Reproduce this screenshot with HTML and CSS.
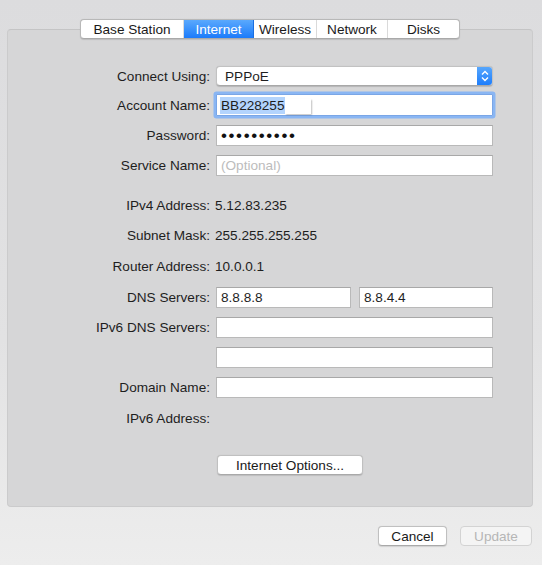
FILE: index.html
```html
<!DOCTYPE html>
<html>
<head>
<meta charset="utf-8">
<link rel="stylesheet" href="styles.css">
</head>
<body>
<div class="window">
  <div class="tabs">
    <div class="tab w-base">Base Station</div>
    <div class="tab w-inet active">Internet</div>
    <div class="tab w-wless">Wireless</div>
    <div class="tab w-net">Network</div>
    <div class="tab w-disks last">Disks</div>
  </div>
  <div class="panel">
    <div class="row">
      <div class="label">Connect Using:</div>
      <div class="popup">
        <span class="popup-text">PPPoE</span>
        <span class="popup-arrows">
          <svg width="16" height="20" viewBox="0 0 16 20">
            <path d="M5 8.5 L8 5.5 L11 8.5" fill="none" stroke="#fff" stroke-width="1.4"/>
            <path d="M5 11.5 L8 14.5 L11 11.5" fill="none" stroke="#fff" stroke-width="1.4"/>
          </svg>
        </span>
      </div>
    </div>
    <div class="row up">
      <div class="label">Account Name:</div>
      <div class="field focus"><span class="sel">BB228255</span><span class="ghost"></span></div>
    </div>
    <div class="row">
      <div class="label">Password:</div>
      <div class="field"><span class="dots">••••••••••</span></div>
    </div>
    <div class="row">
      <div class="label">Service Name:</div>
      <div class="field"><span class="placeholder">(Optional)</span></div>
    </div>
    <div class="row gap-top">
      <div class="label">IPv4 Address:</div>
      <div class="value">5.12.83.235</div>
    </div>
    <div class="row">
      <div class="label">Subnet Mask:</div>
      <div class="value">255.255.255.255</div>
    </div>
    <div class="row nudge">
      <div class="label">Router Address:</div>
      <div class="value">10.0.0.1</div>
    </div>
    <div class="row nudge">
      <div class="label">DNS Servers:</div>
      <div class="pair">
        <div class="field half">8.8.8.8</div>
        <div class="field half">8.8.4.4</div>
      </div>
    </div>
    <div class="row">
      <div class="label">IPv6 DNS Servers:</div>
      <div class="field"></div>
    </div>
    <div class="row">
      <div class="label"></div>
      <div class="field"></div>
    </div>
    <div class="row">
      <div class="label">Domain Name:</div>
      <div class="field"></div>
    </div>
    <div class="row nudge">
      <div class="label">IPv6 Address:</div>
      <div class="value"></div>
    </div>
    <div class="options-row">
      <div class="button options">Internet Options...</div>
    </div>
  </div>
  <div class="footer">
    <div class="button cancel">Cancel</div>
    <div class="button update disabled">Update</div>
  </div>
</div>
</body>
</html>
```
FILE: styles.css
```css
html, body {
  margin: 0;
  padding: 0;
}
body {
  width: 542px;
  height: 565px;
  overflow: hidden;
  font-family: "Liberation Sans", Arial, sans-serif;
  font-size: 13.6px;
  color: #1e1e1e;
  background: linear-gradient(#dcdcde 0%, #e2e2e3 60%, #ededed 100%);
}
.window {
  padding-top: 19px;
}
.tabs {
  position: relative;
  z-index: 2;
  display: flex;
  width: 378px;
  height: 18px;
  margin-left: 80px;
  margin-bottom: -10px;
  background: #fff;
  border: 1px solid #b8b8b8;
  border-bottom-color: #a9a9a9;
  border-radius: 4px;
  box-shadow: 0 0.5px 1px rgba(0,0,0,0.12);
  overflow: hidden;
}
.tab {
  display: flex;
  align-items: center;
  justify-content: center;
  height: 18px;
  border-right: 1px solid #dadada;
  color: #1a1a1a;
  box-sizing: border-box;
}
.tab.last { border-right: none; }
.w-base { width: 103px; }
.w-inet { width: 70px; }
.w-wless { width: 63px; }
.w-net { width: 71px; }
.w-disks { width: 71px; }
.tab.active {
  background: linear-gradient(#5aa9fd, #1b7bfb);
  color: #fff;
  border-right-color: #1b6fe0;
}
.panel {
  margin-left: 7px;
  width: 524px;
  padding-top: 31px;
  padding-bottom: 31px;
  background: #d6d6d7;
  border: 1px solid #cbcbcc;
  border-top-color: #c4c4c5;
  border-radius: 4px;
}
.row {
  display: flex;
  align-items: center;
  height: 30px;
}
.row.up { margin-top: -1px; }
.row.gap-top { margin-top: 10px; }
.row.nudge { margin-top: 1px; }
.label {
  width: 202px;
  text-align: right;
  margin-right: 6px;
  white-space: nowrap;
}
.value {
  margin-left: -1px;
}
.field {
  width: 277px;
  height: 21px;
  box-sizing: border-box;
  background: #fff;
  border: 1px solid #b9b9b9;
  border-top-color: #a8a8a8;
  padding: 0 4px;
  display: flex;
  align-items: center;
  white-space: nowrap;
}
.field.focus {
  height: 22px;
  border-color: #7aa6e6;
  box-shadow: 0 0 0 2.5px #8ab6f3;
  border-radius: 1px;
  padding-left: 3px;
}
.sel {
  background: #b3d4fd;
  padding: 1px 0 1px 1px;
}
.ghost {
  display: inline-block;
  width: 26px;
  height: 15px;
  background: #fff;
  box-shadow: 1px 1px 1.5px rgba(0,0,0,0.25);
  margin-top: 2px;
}
.dots {
  font-size: 17px;
  letter-spacing: 1.6px;
  line-height: 15px;
  color: #111;
}
.placeholder {
  color: #bcbcbc;
}
.pair {
  display: flex;
  gap: 8px;
}
.field.half {
  width: 135px;
}
.field.half + .field.half {
  width: 134px;
}
.popup {
  width: 277px;
  height: 20px;
  box-sizing: border-box;
  background: #fff;
  border: 1px solid #c2c2c2;
  border-bottom-color: #a8a8a8;
  border-radius: 4px;
  box-shadow: 0 0.5px 1px rgba(0,0,0,0.15);
  display: flex;
  align-items: center;
  justify-content: space-between;
  overflow: hidden;
}
.popup-text {
  padding-left: 8px;
}
.popup-arrows {
  width: 16px;
  height: 20px;
  margin-right: -1px;
  background: linear-gradient(#5aa9fd, #1b7bfb);
  display: flex;
  align-items: center;
  justify-content: center;
}
.popup-arrows svg { display: block; }
.options-row {
  margin-top: 22px;
  padding-left: 209px;
  display: flex;
}
.button {
  height: 20px;
  box-sizing: border-box;
  background: #fff;
  border: 1px solid #c0c0c0;
  border-bottom-color: #a9a9a9;
  border-radius: 4px;
  box-shadow: 0 0.5px 1px rgba(0,0,0,0.12);
  display: flex;
  align-items: center;
  justify-content: center;
  color: #1a1a1a;
}
.options {
  width: 146px;
}
.footer {
  display: flex;
  justify-content: flex-end;
  gap: 13px;
  margin-top: 19px;
  padding-right: 10px;
}
.cancel { width: 69px; }
.update { width: 72px; }
.button.disabled {
  background: #f4f4f4;
  border-color: #d3d3d3;
  color: #b6b6b6;
  box-shadow: none;
}
```
